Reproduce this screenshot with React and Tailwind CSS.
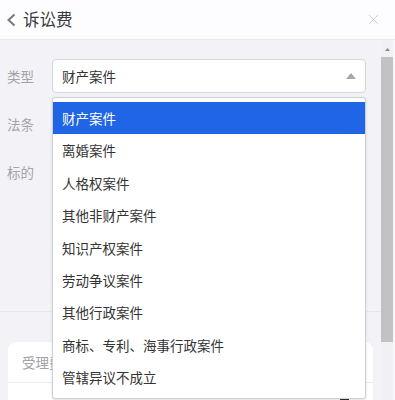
import React from "react";

const options = [
  "财产案件",
  "离婚案件",
  "人格权案件",
  "其他非财产案件",
  "知识产权案件",
  "劳动争议案件",
  "其他行政案件",
  "商标、专利、海事行政案件",
  "管辖异议不成立",
];

function Row({ label, children }) {
  return (
    <div className="flex h-[34px] items-center">
      <div className="w-[52px] pl-[7px] text-[13.5px] text-[#a3a3a8]">{label}</div>
      <div className="relative mr-[15px] h-full flex-1">{children}</div>
    </div>
  );
}

export default function App() {
  return (
    <div
      className="h-[400px] w-[395px] overflow-hidden bg-[#f3f3f7]"
      style={{ fontFamily: '"Noto Sans CJK SC", "Noto Sans", sans-serif' }}
    >
      <header className="flex h-[40px] items-center border-b border-[#e8e8ee] bg-[#fdfdff]">
        <svg className="ml-[6px]" width="11" height="14" viewBox="0 0 11 14">
          <path d="M8.5 1.5 L2.5 7 L8.5 12.5" fill="none" stroke="#7a7a7e" strokeWidth="2" />
        </svg>
        <span className="ml-[6px] text-[16.5px] text-[#3a3a3e]">诉讼费</span>
        <svg className="ml-auto mr-[16px]" width="11" height="11" viewBox="0 0 11 11">
          <path d="M1 1 L10 10 M10 1 L1 10" stroke="#cfcfd4" strokeWidth="1" />
        </svg>
      </header>

      <div className="flex h-[360px]">
        <div className="flex-1">
          <div className="flex flex-col gap-[14px] pt-[19px]">
            <Row label="类型">
              <div className="flex h-full items-center rounded-[4px] border border-[#d6d6dc] bg-white pl-[9px] text-[13.5px] text-[#333]">
                财产案件
                <svg className="ml-auto mr-[9px]" width="10" height="6" viewBox="0 0 10 6">
                  <path d="M0 6 L5 0 L10 6 Z" fill="#a8a8ac" />
                </svg>
              </div>
              <div className="absolute left-0 right-0 top-[38px] z-10 rounded-[3px] border border-[#cfcfd6] bg-white pb-[4px] pt-[4px] shadow-sm">
                {options.map((o, i) => (
                  <div
                    key={o}
                    className={
                      i === 0
                        ? "flex h-[32.4px] items-center bg-[#1f65e6] pl-[9px] text-[13.5px] text-white"
                        : "flex h-[32.4px] items-center pl-[9px] text-[13.5px] text-[#333]"
                    }
                  >
                    {o}
                  </div>
                ))}
              </div>
            </Row>
            <Row label="法条">
              <div className="h-full rounded-[4px] border border-[#d6d6dc] bg-white" />
            </Row>
            <Row label="标的">
              <div className="h-full rounded-[4px] border border-[#d6d6dc] bg-white" />
            </Row>
          </div>
          <div className="h-[123px] border-b border-[#e6e6ec]" />
          <div className="mx-2 mt-[30px] rounded-t-[8px] bg-white">
            <div className="flex h-[41px] items-center border-b border-[#ececf0] pl-[14px] text-[13.5px] text-[#a3a3a8]">
              受理费
            </div>
            <div className="flex h-[20px] items-end">
              <div className="ml-auto mr-[24px] h-[4px] w-[9px] bg-[#333]" />
            </div>
          </div>
        </div>

        <div className="flex w-[12px] flex-col items-center bg-[#f1f1f5]">
          <svg className="mt-[8px]" width="5" height="3" viewBox="0 0 5 3">
            <path d="M0 3 L2.5 0 L5 3 Z" fill="#8a8a8e" />
          </svg>
          <div className="mt-[6px] h-[285px] w-full bg-[#c2c2c4]" />
        </div>
        <div className="w-[2px] bg-[#f8f8fb]" />
      </div>
    </div>
  );
}
